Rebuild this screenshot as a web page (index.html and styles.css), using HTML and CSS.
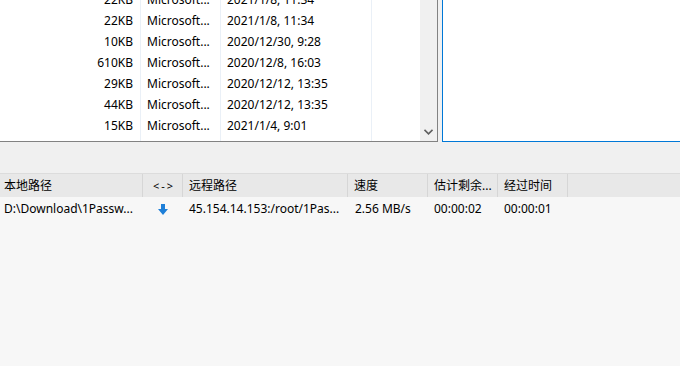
FILE: index.html
```html
<!DOCTYPE html>
<html lang="zh-CN">
<head>
<meta charset="utf-8">
<link rel="stylesheet" href="styles.css">
</head>
<body>
<div class="app">
  <div class="top">
    <div class="local">
      <div class="list">
        <div class="rows">
          <div class="row"><span class="c-size">22KB</span><span class="c-type">Microsoft...</span><span class="c-date">2021/1/8, 11:34</span><span class="c-rest"></span></div>
          <div class="row"><span class="c-size">22KB</span><span class="c-type">Microsoft...</span><span class="c-date">2021/1/8, 11:34</span><span class="c-rest"></span></div>
          <div class="row"><span class="c-size">10KB</span><span class="c-type">Microsoft...</span><span class="c-date">2020/12/30, 9:28</span><span class="c-rest"></span></div>
          <div class="row"><span class="c-size">610KB</span><span class="c-type">Microsoft...</span><span class="c-date">2020/12/8, 16:03</span><span class="c-rest"></span></div>
          <div class="row"><span class="c-size">29KB</span><span class="c-type">Microsoft...</span><span class="c-date">2020/12/12, 13:35</span><span class="c-rest"></span></div>
          <div class="row"><span class="c-size">44KB</span><span class="c-type">Microsoft...</span><span class="c-date">2020/12/12, 13:35</span><span class="c-rest"></span></div>
          <div class="row"><span class="c-size">15KB</span><span class="c-type">Microsoft...</span><span class="c-date">2021/1/4, 9:01</span><span class="c-rest"></span></div>
          <div class="row last"><span class="c-size"></span><span class="c-type"></span><span class="c-date"></span><span class="c-rest"></span></div>
        </div>
      </div>
      <div class="vscroll">
        <svg class="chev" width="9" height="6" viewBox="0 0 9 6"><path d="M0.5 0.8 L4.5 4.8 L8.5 0.8" fill="none" stroke="#606060" stroke-width="1.6"/></svg>
      </div>
    </div>
    <div class="remote"></div>
  </div>
  <div class="band"></div>
  <div class="queue">
    <div class="qhead">
      <div class="h h-local">本地路径</div>
      <div class="h h-dir">&lt;-&gt;</div>
      <div class="h h-remote">远程路径</div>
      <div class="h h-speed">速度</div>
      <div class="h h-eta">估计剩余...</div>
      <div class="h h-elapsed">经过时间</div>
      <div class="h h-fill"></div>
    </div>
    <div class="qrow">
      <div class="d h-local">D:\Download\1Passw...</div>
      <div class="d h-dir icon"><svg width="10" height="11" viewBox="0 0 10 11"><path d="M3 0 H7 V5 H10 L5 11 L0 5 H3 Z" fill="#1e7fd8"/></svg></div>
      <div class="d h-remote">45.154.14.153:/root/1Pas...</div>
      <div class="d h-speed">2.56 MB/s</div>
      <div class="d h-eta">00:00:02</div>
      <div class="d h-elapsed">00:00:01</div>
    </div>
  </div>
</div>
</body>
</html>
```
FILE: styles.css
```css
* { box-sizing: border-box; }
html, body { margin: 0; padding: 0; }
body {
  width: 680px;
  height: 366px;
  overflow: hidden;
  background: #f0f0f0;
  font-family: "Noto Sans", "Noto Sans CJK SC", sans-serif;
  font-size: 12px;
  color: #000;
}
.app { display: flex; flex-direction: column; height: 366px; }
.top { display: flex; height: 142px; gap: 4px; }
.local {
  width: 438px;
  display: flex;
  border-right: 1px solid #828282;
  border-bottom: 1px solid #828282;
  background: #fff;
}
.list { flex: 1; overflow: hidden; }
.rows { margin-top: -11px; }
.row { display: flex; height: 21px; line-height: 21px; white-space: nowrap; }
.row span { display: block; height: 21px; }
.c-size { width: 141px; text-align: right; padding-right: 7px; border-right: 1px solid #eaf0f7; }
.c-type { width: 80px; padding-left: 6px; border-right: 1px solid #eaf0f7; }
.c-date { width: 151px; padding-left: 6px; border-right: 1px solid #eaf0f7; }
.c-rest { flex: 1; }
.vscroll {
  width: 17px;
  background: #f0f0f0;
  display: flex;
  align-items: flex-end;
  justify-content: center;
  padding-bottom: 6px;
}
.remote {
  flex: 1;
  background: #fff;
  border-left: 1px solid #0078d7;
  border-bottom: 1px solid #0078d7;
}
.band { height: 31px; }
.queue { flex: 1; background: #f7f7f7; }
.qhead { display: flex; height: 24px; background: #e8e8e8; border-top: 1px solid #dcdcdc; }
.h { line-height: 23px; padding-left: 4px; border-right: 1px solid #d6d6d6; white-space: nowrap; }
.h-local { width: 143px; }
.h-dir { width: 40px; padding-left: 10px; font-size: 11px; letter-spacing: 2px; }
.h-remote { width: 165px; padding-left: 6px; }
.h-speed { width: 80px; padding-left: 6px; }
.h-eta { width: 70px; padding-left: 6px; }
.h-elapsed { width: 70px; padding-left: 6px; }
.qhead .h-fill { flex: 1; border-right: none; }
.qrow { display: flex; height: 22px; margin-top: 1px; }
.d { line-height: 22px; padding-left: 4px; white-space: nowrap; }
.qrow .h-remote { padding-left: 6px; }
.qrow .h-speed { padding-left: 7px; }
.qrow .h-eta { padding-left: 6px; }
.qrow .h-elapsed { padding-left: 6px; }
.icon { display: flex; align-items: center; padding-left: 15px; }
```
